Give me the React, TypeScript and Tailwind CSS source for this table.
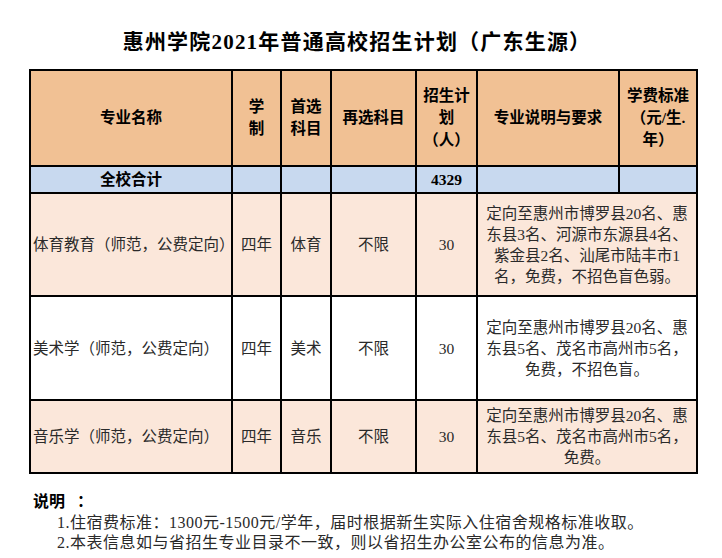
import React from "react";

const serif = { fontFamily: '"Liberation Serif", "Noto Sans CJK SC", serif' };
const sansBold = { fontFamily: '"Liberation Serif", "Noto Sans CJK SC", sans-serif' };

const th = "border-2 border-black bg-[#F1C194] text-center align-middle font-bold text-[15.5px] leading-[22px] text-black p-0";
const tot = "border-2 border-black bg-[#C8D9EF] text-center align-middle font-bold text-[15.5px] leading-[20px] text-black p-0";
const td = "border-2 border-black text-center align-middle text-[15.5px] leading-[21px] text-[#2a2a2a] p-0";

type Row = { name: string; sub: string; desc: React.ReactNode; bg: string; h: string };

const rows: Row[] = [
  {
    name: "体育教育（师范，公费定向）",
    sub: "体育",
    desc: (
      <>
        定向至惠州市博罗县20名、惠
        <br />
        东县3名、河源市东源县4名、
        <br />
        紫金县2名、汕尾市陆丰市1
        <br />
        名，免费，不招色盲色弱。
      </>
    ),
    bg: "bg-[#FBE7DA]",
    h: "h-[103px]",
  },
  {
    name: "美术学（师范，公费定向）",
    sub: "美术",
    desc: (
      <>
        定向至惠州市博罗县20名、惠
        <br />
        东县5名、茂名市高州市5名，
        <br />
        免费，不招色盲。
      </>
    ),
    bg: "bg-white",
    h: "h-[104px]",
  },
  {
    name: "音乐学（师范，公费定向）",
    sub: "音乐",
    desc: (
      <>
        定向至惠州市博罗县20名、惠
        <br />
        东县5名、茂名市高州市5名，
        <br />
        免费。
      </>
    ),
    bg: "bg-[#FBE7DA]",
    h: "h-[73px]",
  },
];

export default function App() {
  return (
    <div className="w-[722px] h-[558px] bg-white overflow-hidden" style={serif}>
      <div className="pt-[28px] h-[69px] text-center text-[21px] leading-[28px] font-bold text-black tracking-[1.2px] pr-[8px]">
        惠州学院2021年普通高校招生计划（广东生源）
      </div>
      <table className="ml-[29px] border-collapse table-fixed w-[669px]" style={sansBold}>
        <colgroup>
          <col className="w-[202px]" />
          <col className="w-[49px]" />
          <col className="w-[50px]" />
          <col className="w-[85px]" />
          <col className="w-[61px]" />
          <col className="w-[142px]" />
          <col className="w-[78px]" />
        </colgroup>
        <tbody>
          <tr className="h-[96px]">
            <td className={th}>专业名称</td>
            <td className={th}>
              学<br />制
            </td>
            <td className={th}>
              首选<br />科目
            </td>
            <td className={th}>再选科目</td>
            <td className={th}>
              招生计<br />划<br />（人）
            </td>
            <td className={th}>专业说明与要求</td>
            <td className={th}>
              学费标准<br />（元/生.<br />年）
            </td>
          </tr>
          <tr className="h-[27px]">
            <td className={tot}>全校合计</td>
            <td className={tot}></td>
            <td className={tot}></td>
            <td className={tot}></td>
            <td className={tot}>4329</td>
            <td className={tot}></td>
            <td className={tot}></td>
          </tr>
          {rows.map((r) => (
            <tr key={r.name} className={`${r.h} ${r.bg}`} style={serif}>
              <td className={`${td} !text-left pl-[2px] whitespace-nowrap overflow-hidden`}>{r.name}</td>
              <td className={td}>四年</td>
              <td className={td}>{r.sub}</td>
              <td className={td}>不限</td>
              <td className={td}>30</td>
              <td className={td} colSpan={2}>
                {r.desc}
              </td>
            </tr>
          ))}
        </tbody>
      </table>
      <div className="pl-[33px] mt-[18px] text-[16px] leading-[20px] text-black">
        <div className="font-bold" style={sansBold}>
          说明<span className="ml-[12px]">：</span>
        </div>
        <div className="pl-[24px] mt-[1px] text-[#2a2a2a] tracking-[0.5px]">
          1.住宿费标准：1300元-1500元/学年，届时根据新生实际入住宿舍规格标准收取。
        </div>
        <div className="pl-[24px] text-[#2a2a2a] tracking-[0.5px]">
          2.本表信息如与省招生专业目录不一致，则以省招生办公室公布的信息为准。
        </div>
      </div>
    </div>
  );
}
